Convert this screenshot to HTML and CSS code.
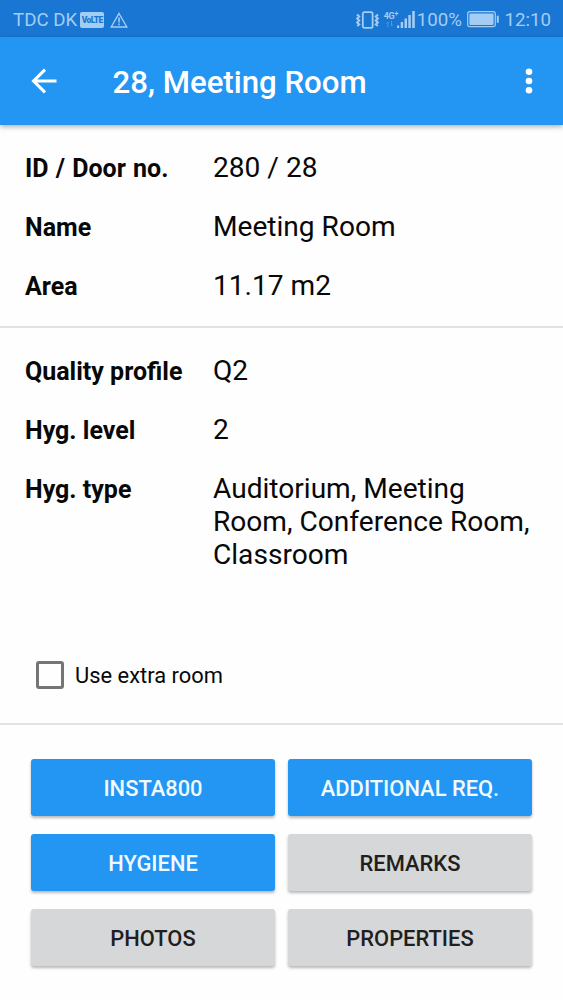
FILE: index.html
```
<!DOCTYPE html>
<html lang="en">
<head>
    <meta charset="UTF-8">
    <meta name="viewport" content="width=device-width, initial-scale=1.0">
    <title>28, Meeting Room</title>
    <link rel="stylesheet" href="styles.css">
</head>
<body>
    <div class="status-bar">
        <span class="carrier">TDC DK</span>
        <span class="volte">VoLTE</span>
        <svg class="warning" width="18" height="16" viewBox="0 0 18 16" fill="none" stroke="currentColor">
            <path d="M9 1.5L16.8 15H1.2Z" stroke-width="1.4"/>
            <path d="M9 5.5v5M9 11.5v1.8" stroke-width="1.6"/>
        </svg>
        <svg class="vibrate" width="24" height="18" viewBox="0 0 24 18" fill="none" stroke="currentColor">
            <rect x="6.8" y="1.2" width="9.8" height="15.6" rx="1.6" stroke-width="1.8"/>
            <path d="M1 3.5l2.2 2L1.2 7.5l2 2-2 2L3.2 13.5 1.2 15M22 3.5l-2.2 2 2 2-2 2 2 2-2 2 2 1.5" stroke-width="2"/>
        </svg>
        <div class="network">
            <span class="network-type">4G<sup>+</sup></span>
            <svg class="data-arrows" width="8" height="6" viewBox="0 0 8 6" fill="none" stroke="currentColor">
                <path d="M2 6V1L.5 2.5M5.5 0v5L7 3.5"/>
            </svg>
            <svg class="signal" width="20" height="17" viewBox="0 0 20 17" fill="currentColor">
                <rect x="0" y="14.5" width="2.2" height="2.5"/>
                <rect x="3.7" y="11" width="2.4" height="6"/>
                <rect x="7.5" y="7.5" width="2.5" height="9.5"/>
                <rect x="11.3" y="4" width="2.5" height="13"/>
                <rect x="15.2" y="0" width="2.6" height="17"/>
            </svg>
        </div>
        <span class="percent">100%</span>
        <svg class="battery" width="33" height="17" viewBox="0 0 33 17">
            <rect x=".7" y=".7" width="27.6" height="15" rx="2.2" fill="none" stroke="currentColor" stroke-width="1.2"/>
            <rect x="2.4" y="2.4" width="24.2" height="11.6" rx="1" fill="currentColor"/>
            <rect x="29.8" y="4.4" width="2" height="7.6" rx="1" fill="currentColor"/>
        </svg>
        <span class="clock">12:10</span>
    </div>

    <header class="toolbar">
        <svg class="back" width="26" height="26" viewBox="0 0 26 26" fill="none" stroke="currentColor" stroke-width="3.1">
            <path d="M25.5 13H3M14 1.6L2.6 13 14 24.4"/>
        </svg>
        <h1>28, Meeting Room</h1>
        <svg class="more" width="8" height="26" viewBox="0 0 8 26" fill="currentColor">
            <circle cx="4" cy="3.7" r="3.3"/>
            <circle cx="4" cy="13" r="3.3"/>
            <circle cx="4" cy="22.3" r="3.3"/>
        </svg>
    </header>

    <main>
        <dl class="details">
            <dt class="door">ID / Door no.</dt>
            <dd>280 / 28</dd>
            <dt>Name</dt>
            <dd>Meeting Room</dd>
            <dt>Area</dt>
            <dd>11.17 m2</dd>
        </dl>
        <section class="profile">
            <dl class="details">
                <dt>Quality profile</dt>
                <dd>Q2</dd>
                <dt>Hyg. level</dt>
                <dd>2</dd>
                <dt>Hyg. type</dt>
                <dd>Auditorium, Meeting Room, Conference Room, Classroom</dd>
            </dl>
            <label class="extra-room">
                <input type="checkbox">
                <span>Use extra room</span>
            </label>
        </section>
        <div class="button-group">
            <button class="primary">INSTA800</button>
            <button class="primary">ADDITIONAL REQ.</button>
            <button class="primary">HYGIENE</button>
            <button>REMARKS</button>
            <button>PHOTOS</button>
            <button>PROPERTIES</button>
        </div>
    </main>
</body>
</html>
```
FILE: styles.css
```
* {
    box-sizing: border-box;
}
body {
    font-family: Roboto, sans-serif;
    margin: 0;
    height: 1000px;
    overflow: hidden;
    background: #fefefe;
    color: #080808;
}
.status-bar {
    display: flex;
    align-items: center;
    height: 37px;
    padding: 2px 12px 0 13px;
    background: #1976d2;
    color: #a3cdf3;
    font-size: 18.7px;
    line-height: 22px;
    white-space: nowrap;
}
.status-bar svg {
    flex: none;
}
.volte {
    width: 24px;
    height: 16px;
    margin-left: 3px;
    border-radius: 2px;
    background: #a3cdf3;
    color: #1976d2;
    font-size: 8.5px;
    font-weight: 900;
    line-height: 16px;
    letter-spacing: -0.6px;
    text-align: center;
}
.warning {
    margin-left: 6px;
}
.vibrate {
    margin-left: auto;
}
.network {
    display: grid;
    grid-template-columns: 13px 20px;
    grid-template-rows: 10px 7px;
    margin-left: 4px;
}
.network-type {
    font-size: 9px;
    font-weight: 700;
    line-height: 10px;
    letter-spacing: -0.3px;
}
.network-type sup {
    font-size: 7px;
    line-height: 0;
    vertical-align: 3px;
}
.data-arrows {
    justify-self: center;
    opacity: 0.4;
}
.signal {
    grid-column: 2;
    grid-row: 1 / 3;
}
.battery {
    margin: 0 4.5px 0 5px;
}
.toolbar {
    display: flex;
    align-items: center;
    height: 88px;
    padding: 0 30px 0 31px;
    background: #2396f3;
    color: #fff;
    box-shadow: 0 2px 5px rgba(0,0,0,0.3);
}
.toolbar h1 {
    margin: 2px 0 0 55.5px;
    font-size: 31.2px;
    font-weight: 500;
    line-height: 37px;
}
.more {
    margin-left: auto;
}
.details {
    display: grid;
    grid-template-columns: 188px 1fr;
    align-items: baseline;
    row-gap: 26.3px;
    margin: 0;
    padding: 25.7px 25px 23.8px;
}
.details dt {
    font-size: 25px;
    font-weight: 700;
    line-height: 29px;
}
.details .door {
    word-spacing: 1px;
}
.details dd {
    margin: 0;
    font-size: 28.1px;
    line-height: 33px;
}
.profile {
    height: 399px;
    border-top: 2px solid #e2e2e2;
    border-bottom: 2px solid #e2e2e2;
}
.extra-room {
    display: flex;
    align-items: center;
    gap: 11px;
    margin: 65px 0 0 36px;
    font-size: 21.9px;
    line-height: 28px;
}
.extra-room span {
    padding-top: 2px;
}
.extra-room input {
    appearance: none;
    width: 28px;
    height: 28px;
    margin: 0;
    border: 3px solid #757575;
    border-radius: 3px;
}
.button-group {
    display: grid;
    grid-template-columns: 1fr 1fr;
    gap: 18.5px 13px;
    padding: 34px 31px 0;
}
button {
    height: 56.5px;
    padding: 2px 0 0;
    background: #d6d7d8;
    color: #1f1f21;
    border: none;
    border-radius: 3px;
    box-shadow: 0 2px 3px rgba(0,0,0,0.28);
    font-family: inherit;
    font-size: 21.9px;
    font-weight: 500;
}
button.primary {
    background: #2396f3;
    color: #f0faff;
}
```
